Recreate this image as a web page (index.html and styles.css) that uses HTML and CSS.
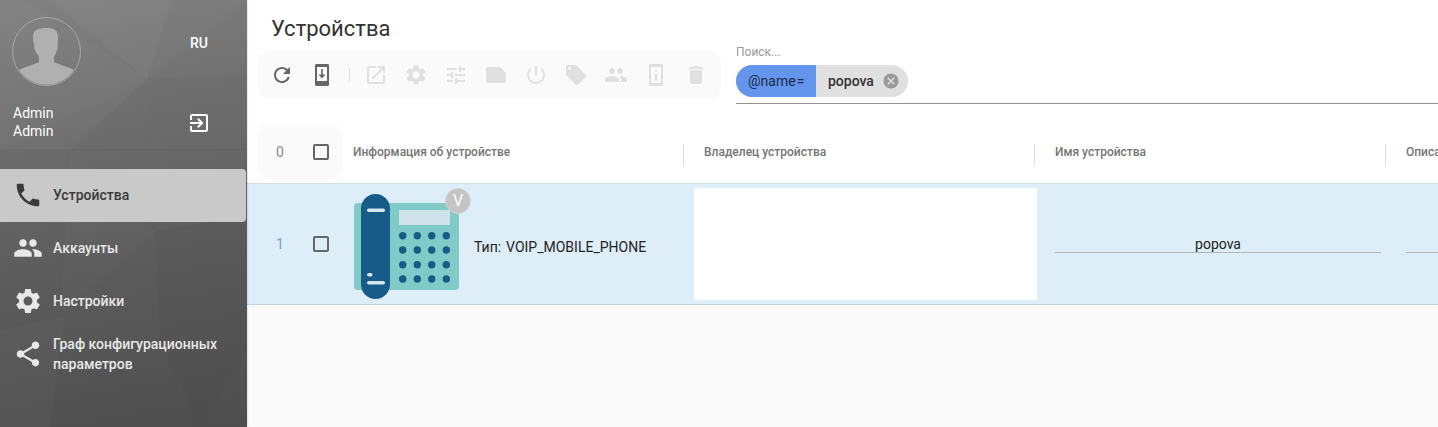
FILE: index.html
```html
<!DOCTYPE html>
<html lang="ru">
<head>
<meta charset="utf-8">
<title>Устройства</title>
<link rel="stylesheet" href="styles.css">
</head>
<body>
<div class="app">
  <aside class="sidebar">
    <svg class="facets" viewBox="0 0 247 427" preserveAspectRatio="none" aria-hidden="true">
      <polygon points="0,0 24,0 147,79 0,150" fill="#fff" opacity=".02"/>
      <polygon points="50,0 172,0 147,79" fill="#fff" opacity=".035"/>
      <polygon points="147,79 247,0 247,75" fill="#000" opacity=".02"/>
      <polygon points="147,79 247,75 247,150 150,150" fill="#000" opacity=".04"/>
      <polygon points="147,79 150,150 70,150" fill="#000" opacity=".03"/>
      <polygon points="0,330 65,316 50,427 0,427" fill="#fff" opacity=".02"/>
      <polygon points="155,231 247,215 247,350 200,427 160,340" fill="#000" opacity=".025"/>
      <polygon points="70,150 155,231 60,316" fill="#fff" opacity=".015"/>
    </svg>
    <header class="profile">
      <div class="profile-col">
        <div class="avatar">
          <svg viewBox="0 0 67 67" aria-hidden="true"><path fill="#b0b0b0" d="M20 19c0-7 5-9 13-9s12 2 12 9c0 4 0 6-.5 9 .5 1 .5 3-.5 4-1 3-2 5-3 7v5c3 2 12 4 20 8A33 33 0 0 1 6 52c8-4 17-6 20-8v-5c-1-2-3-4-4-7-1-1-1-3-.5-4-1-3-1.500-5-1.500-9z"/></svg>
        </div>
        <div class="user-name">Admin<br>Admin</div>
      </div>
      <div class="profile-actions">
        <span class="lang">RU</span>
        <svg class="icon" viewBox="0 0 24 24" aria-hidden="true"><path d="M10.09 15.59L11.5 17l5-5-5-5-1.41 1.41L12.67 11H3v2h9.67l-2.58 2.59zM19 3H5c-1.11 0-2 .9-2 2v4h2V5h14v14H5v-4H3v4c0 1.1.89 2 2 2h14c1.1 0 2-.9 2-2V5c0-1.1-.9-2-2-2z"/></svg>
      </div>
    </header>
    <nav class="nav">
      <a class="nav-item nav-item-active">
        <svg class="nav-icon" viewBox="0 0 24 24" aria-hidden="true"><path d="M6.62 10.79c1.44 2.83 3.76 5.14 6.59 6.59l2.2-2.2c.27-.27.67-.36 1.02-.24 1.12.37 2.33.57 3.57.57.55 0 1 .45 1 1V20c0 .55-.45 1-1 1-9.39 0-17-7.61-17-17 0-.55.45-1 1-1h3.5c.55 0 1 .45 1 1 0 1.25.2 2.45.57 3.57.11.35.03.74-.25 1.02l-2.2 2.2z"/></svg>
        <span class="nav-text">Устройства</span>
      </a>
      <a class="nav-item">
        <svg class="nav-icon" viewBox="0 0 24 24" aria-hidden="true"><path d="M16 11c1.66 0 2.99-1.34 2.99-3S17.66 5 16 5c-1.66 0-3 1.34-3 3s1.34 3 3 3zm-8 0c1.66 0 2.99-1.34 2.99-3S9.66 5 8 5C6.34 5 5 6.34 5 8s1.34 3 3 3zm0 2c-2.33 0-7 1.17-7 3.5V19h14v-2.5c0-2.33-4.67-3.5-7-3.5zm8 0c-.29 0-.62.02-.97.05 1.16.84 1.97 1.97 1.97 3.45V19h6v-2.5c0-2.33-4.67-3.5-7-3.5z"/></svg>
        <span class="nav-text">Аккаунты</span>
      </a>
      <a class="nav-item">
        <svg class="nav-icon" viewBox="0 0 24 24" aria-hidden="true"><path d="M19.14 12.94c.04-.3.06-.61.06-.94 0-.32-.02-.64-.07-.94l2.03-1.58c.18-.14.23-.41.12-.61l-1.92-3.32c-.12-.22-.37-.29-.59-.22l-2.39.96c-.5-.38-1.03-.7-1.62-.94l-.36-2.54c-.04-.24-.24-.41-.48-.41h-3.84c-.24 0-.43.17-.47.41l-.36 2.54c-.59.24-1.13.57-1.62.94l-2.39-.96c-.22-.08-.47 0-.59.22L2.74 8.87c-.12.21-.08.47.12.61l2.03 1.58c-.05.3-.09.63-.09.94s.02.64.07.94l-2.03 1.58c-.18.14-.23.41-.12.61l1.92 3.32c.12.22.37.29.59.22l2.39-.96c.5.38 1.03.7 1.62.94l.36 2.54c.05.24.24.41.48.41h3.84c.24 0 .44-.17.47-.41l.36-2.54c.59-.24 1.13-.56 1.62-.94l2.39.96c.22.08.47 0 .59-.22l1.92-3.32c.12-.22.07-.47-.12-.61l-2.01-1.58zM12 15.6c-1.98 0-3.6-1.62-3.6-3.6s1.62-3.6 3.6-3.6 3.6 1.62 3.6 3.6-1.62 3.6-3.6 3.6z"/></svg>
        <span class="nav-text">Настройки</span>
      </a>
      <a class="nav-item">
        <svg class="nav-icon" viewBox="0 0 24 24" aria-hidden="true"><path d="M18 16.08c-.76 0-1.44.3-1.96.77L8.91 12.7c.05-.23.09-.46.09-.7s-.04-.47-.09-.7l7.05-4.11c.54.5 1.25.81 2.04.81 1.66 0 3-1.34 3-3s-1.34-3-3-3-3 1.34-3 3c0 .24.04.47.09.7L8.04 9.81C7.5 9.31 6.79 9 6 9c-1.66 0-3 1.34-3 3s1.34 3 3 3c.79 0 1.5-.31 2.04-.81l7.12 4.16c-.05.21-.08.43-.08.65 0 1.61 1.31 2.92 2.92 2.92 1.61 0 2.92-1.31 2.92-2.92s-1.31-2.92-2.92-2.92z"/></svg>
        <span class="nav-text">Граф конфигурационных параметров</span>
      </a>
    </nav>
  </aside>

  <main class="main">
    <div class="top">
      <h1 class="title">Устройства</h1>
      <div class="controls">
        <div class="toolbar">
          <button class="tool tool-on"><svg class="icon" viewBox="0 0 24 24" aria-hidden="true"><path d="M17.65 6.35C16.2 4.9 14.21 4 12 4c-4.42 0-7.99 3.58-7.99 8s3.57 8 7.99 8c3.73 0 6.84-2.55 7.73-6h-2.08c-.82 2.33-3.04 4-5.65 4-3.31 0-6-2.69-6-6s2.69-6 6-6c1.66 0 3.14.69 4.22 1.78L13 11h7V4l-2.35 2.35z"/></svg></button>
          <button class="tool tool-on"><svg class="icon" viewBox="0 0 24 24" aria-hidden="true"><path fill-rule="evenodd" d="M6.500 1h11c1 0 1.500.7 1.500 1.500v19c0 .8-.5 1.500-1.500 1.500h-11C5.500 23 5 22.300 5 21.500v-19C5 1.700 5.500 1 6.500 1zM7 4v14h10V4H7zm4.200 2h1.600v5.500H15.500L12 15.500 8.500 11.500h2.700V6z"/></svg></button>
          <span class="tool-sep"></span>
          <button class="tool"><svg class="icon" viewBox="0 0 24 24" aria-hidden="true"><path d="M19 19H5V5h7V3H5c-1.11 0-2 .9-2 2v14c0 1.1.89 2 2 2h14c1.1 0 2-.9 2-2v-7h-2v7zM14 3v2h3.59l-9.83 9.83 1.41 1.41L19 6.41V10h2V3h-7z"/></svg></button>
          <button class="tool"><svg class="icon" viewBox="0 0 24 24" aria-hidden="true"><path d="M19.14 12.94c.04-.3.06-.61.06-.94 0-.32-.02-.64-.07-.94l2.03-1.58c.18-.14.23-.41.12-.61l-1.92-3.32c-.12-.22-.37-.29-.59-.22l-2.39.96c-.5-.38-1.03-.7-1.62-.94l-.36-2.54c-.04-.24-.24-.41-.48-.41h-3.84c-.24 0-.43.17-.47.41l-.36 2.54c-.59.24-1.13.57-1.62.94l-2.39-.96c-.22-.08-.47 0-.59.22L2.74 8.87c-.12.21-.08.47.12.61l2.03 1.58c-.05.3-.09.63-.09.94s.02.64.07.94l-2.03 1.58c-.18.14-.23.41-.12.61l1.92 3.32c.12.22.37.29.59.22l2.39-.96c.5.38 1.03.7 1.62.94l.36 2.54c.05.24.24.41.48.41h3.84c.24 0 .44-.17.47-.41l.36-2.54c.59-.24 1.13-.56 1.62-.94l2.39.96c.22.08.47 0 .59-.22l1.92-3.32c.12-.22.07-.47-.12-.61l-2.01-1.58zM12 15.6c-1.98 0-3.6-1.62-3.6-3.6s1.62-3.6 3.6-3.6 3.6 1.62 3.6 3.6-1.62 3.6-3.6 3.6z"/></svg></button>
          <button class="tool"><svg class="icon" viewBox="0 0 24 24" aria-hidden="true"><path d="M3 17v2h6v-2H3zM3 5v2h10V5H3zm10 16v-2h8v-2h-8v-2h-2v6h2zM7 9v2H3v2h4v2h2V9H7zm14 4v-2H11v2h10zm-6-4h2V7h4V5h-4V3h-2v6z"/></svg></button>
          <button class="tool"><svg class="icon" viewBox="0 0 24 24" aria-hidden="true"><path d="M22 10l-6-6H4c-1.1 0-2 .9-2 2v12.01c0 1.1.9 1.99 2 1.99l16-.01c1.1 0 2-.89 2-1.99v-8z"/></svg></button>
          <button class="tool"><svg class="icon" viewBox="0 0 24 24" aria-hidden="true"><path d="M13 3h-2v10h2V3zm4.830 2.170l-1.420 1.420C17.990 7.860 19 9.810 19 12c0 3.870-3.130 7-7 7s-7-3.130-7-7c0-2.190 1.010-4.140 2.580-5.420L6.170 5.170C4.230 6.820 3 9.260 3 12c0 4.970 4.030 9 9 9s9-4.030 9-9c0-2.740-1.230-5.180-3.170-6.830z"/></svg></button>
          <button class="tool"><svg class="icon" viewBox="0 0 24 24" aria-hidden="true"><path d="M21.41 11.58l-9-9C12.05 2.22 11.55 2 11 2H4c-1.1 0-2 .9-2 2v7c0 .55.22 1.05.59 1.42l9 9c.36.36.86.58 1.41.58.55 0 1.05-.22 1.41-.59l7-7c.37-.36.59-.86.59-1.41 0-.55-.23-1.06-.59-1.42zM5.5 7C4.67 7 4 6.33 4 5.5S4.67 4 5.5 4 7 4.67 7 5.5 6.33 7 5.5 7z"/></svg></button>
          <button class="tool"><svg class="icon" viewBox="0 0 24 24" aria-hidden="true"><path d="M16 11c1.66 0 2.99-1.34 2.99-3S17.66 5 16 5c-1.66 0-3 1.34-3 3s1.34 3 3 3zm-8 0c1.66 0 2.99-1.34 2.99-3S9.66 5 8 5C6.34 5 5 6.34 5 8s1.34 3 3 3zm0 2c-2.33 0-7 1.17-7 3.5V19h14v-2.5c0-2.33-4.67-3.5-7-3.5zm8 0c-.29 0-.62.02-.97.05 1.16.84 1.97 1.97 1.97 3.45V19h6v-2.5c0-2.33-4.67-3.5-7-3.5z"/></svg></button>
          <button class="tool"><svg class="icon" viewBox="0 0 24 24" aria-hidden="true"><path fill-rule="evenodd" d="M6.500 1h11c1 0 1.500.7 1.500 1.500v19c0 .8-.5 1.500-1.500 1.500h-11C5.500 23 5 22.300 5 21.500v-19C5 1.700 5.500 1 6.500 1zM7 4v16h10V4H7zm4 2.500h2v2h-2v-2zm0 4h2v7h-2v-7z"/></svg></button>
          <button class="tool"><svg class="icon" viewBox="0 0 24 24" aria-hidden="true"><path d="M6 19c0 1.1.9 2 2 2h8c1.1 0 2-.9 2-2V7H6v12zM19 4h-3.5l-1-1h-5l-1 1H5v2h14V4z"/></svg></button>
        </div>
        <div class="search">
          <label class="search-label">Поиск...</label>
          <div class="chip">
            <span class="chip-key">@name<span class="chip-op">=</span></span>
            <span class="chip-value">popova</span>
            <svg class="chip-close" viewBox="0 0 24 24" aria-hidden="true"><path d="M12 2C6.47 2 2 6.47 2 12s4.47 10 10 10 10-4.47 10-10S17.53 2 12 2zm5 13.59L15.59 17 12 13.41 8.41 17 7 15.59 10.59 12 7 8.41 8.41 7 12 10.59 15.59 7 17 8.41 13.41 12 17 15.59z"/></svg>
          </div>
        </div>
      </div>
    </div>

    <div class="table">
      <div class="row row-head">
        <div class="num-cell num-head"><span class="num">0</span><span class="check"></span></div>
        <div class="cell cell-first">Информация об устройстве</div>
        <div class="cell">Владелец устройства</div>
        <div class="cell">Имя устройства</div>
        <div class="cell">Описание</div>
      </div>
      <div class="row row-body">
        <div class="num-cell"><span class="num num-link">1</span><span class="check"></span></div>
        <div class="device">
          <div class="device-pic">
            <svg class="device-img" viewBox="0 0 105 105" aria-hidden="true">
              <rect x="0" y="9" width="105" height="87" rx="4" fill="#80cbc8"/>
              <rect x="45" y="16" width="51" height="15" fill="#d0e2e9"/>
              <g fill="#175c88">
                <rect x="7" y="0" width="29" height="105" rx="14.5"/>
                <circle cx="48.7" cy="41.7" r="3.7"/><circle cx="63.3" cy="41.7" r="3.7"/><circle cx="77.7" cy="41.7" r="3.7"/><circle cx="92.3" cy="41.7" r="3.7"/>
                <circle cx="48.7" cy="56" r="3.7"/><circle cx="63.3" cy="56" r="3.7"/><circle cx="77.7" cy="56" r="3.7"/><circle cx="92.3" cy="56" r="3.7"/>
                <circle cx="48.7" cy="70.7" r="3.7"/><circle cx="63.3" cy="70.7" r="3.7"/><circle cx="77.7" cy="70.7" r="3.7"/><circle cx="92.3" cy="70.7" r="3.7"/>
                <circle cx="48.7" cy="85" r="3.7"/><circle cx="63.3" cy="85" r="3.7"/><circle cx="77.7" cy="85" r="3.7"/><circle cx="92.3" cy="85" r="3.7"/>
              </g>
              <g fill="#d8e6ec">
                <rect x="13" y="14.5" width="18" height="3.4" rx="1.7"/>
                <rect x="13" y="87" width="18" height="3.4" rx="1.7"/>
                <rect x="13" y="79" width="5.5" height="3.4" rx="1.7"/>
              </g>
            </svg>
            <span class="badge">V</span>
          </div>
          <span class="device-type">Тип:&nbsp; VOIP_MOBILE_PHONE</span>
        </div>
        <div class="owner"></div>
        <div class="field-cell"><div class="field">popova</div></div>
        <div class="field-cell"><div class="field"></div></div>
      </div>
    </div>
  </main>
</div>
</body>
</html>
```

FILE: styles.css
```css
* { box-sizing: border-box; }
html, body { margin: 0; height: 100%; overflow: hidden; }
body { font-family: Roboto, "Noto Sans", sans-serif; color: #222; background: #fff; }

.app { display: flex; width: 1438px; height: 427px; overflow: hidden; }

.icon { width: 24px; height: 24px; fill: currentColor; display: block; }

/* sidebar */
.sidebar {
  position: relative;
  flex: 0 0 247px;
  height: 427px;
  color: #fff;
  background: linear-gradient(170deg, #7c7c7c 0, #6a6a6a 35%, #5c5c5c 60%, #4e4e4e 100%);
  box-shadow: 0 0 2px rgba(0,0,0,.25);
  z-index: 1;
}
.facets { position: absolute; inset: 0; width: 100%; height: 100%; }

.profile {
  position: relative;
  display: flex;
  justify-content: space-between;
  height: 149px;
  padding: 17px 36px 0 12px;
  background: rgba(255,255,255,.04);
}
.avatar {
  width: 69px;
  height: 69px;
  border: 1px solid #a8a8a8;
  border-radius: 50%;
  overflow: hidden;
}
.avatar svg { display: block; width: 67px; height: 67px; }
.user-name { margin: 18px 0 0 1px; font-size: 14px; line-height: 18px; font-weight: 400; }
.profile-actions {
  display: flex;
  flex-direction: column;
  align-items: center;
  width: 24px;
  padding-top: 18px;
  gap: 60px;
}
.lang { font-size: 14px; line-height: 16px; font-weight: 500; }
.nav { position: relative; padding-top: 20px; }
.nav-item {
  display: flex;
  align-items: center;
  height: 53px;
  padding-left: 13px;
  gap: 10px;
  font-size: 14px;
  line-height: 20px;
  font-weight: 500;
  color: #e8e8e8;
}
.nav-text { margin-top: -2px; }
.nav-item-active {
  width: 246px;
  background: #c9c9c9;
  color: #3a3a3a;
  border-radius: 0 4px 4px 0;
}
.nav-icon { flex: 0 0 30px; width: 30px; height: 30px; fill: currentColor; margin-top: -1px; }

/* main */
.main { flex: 1; min-width: 0; display: flex; flex-direction: column; background: #fafafa; overflow: hidden; }
.top { background: #fff; height: 124px; padding: 16px 0 0 10px; }
.title { margin: 0 0 0 14px; font-size: 22px; line-height: 26px; font-weight: 400; color: #333; }
.controls { display: flex; gap: 15px; margin-top: 9px; }
.toolbar {
  flex: 0 0 464px;
  display: flex;
  align-items: center;
  height: 48px;
  padding: 0 5px;
  background: #fafafa;
  border-radius: 12px;
}
.tool {
  flex: 0 0 40px;
  display: flex;
  align-items: center;
  justify-content: center;
  height: 40px;
  padding: 0;
  border: 0;
  background: none;
  color: #e0e0e0;
}
.tool-on { color: #666; }
.tool-sep { flex: 0 0 14px; height: 14px; position: relative; }
.tool-sep::before { content: ""; display: block; width: 1px; height: 14px; margin: 0 auto; background: #ddd; }

.search { flex: 1; height: 59px; border-bottom: 1px solid #949494; margin-top: -6px; }
.search-label { display: block; font-size: 12px; line-height: 14px; color: #999; height: 14px; }
.chip {
  display: inline-flex;
  align-items: center;
  height: 32px;
  margin-top: 6px;
  background: #e0e0e0;
  border-radius: 16px;
  font-size: 14px;
  color: #222;
}
.chip-key {
  display: flex;
  align-items: center;
  justify-content: flex-start;
  width: 80px;
  height: 32px;
  padding: 0 0 0 12px;
  background: #6495ed;
  border-radius: 16px 0 0 16px;
  color: #1c2a44;
}
.chip-op { margin-left: 1px; }
.chip-value { padding-left: 12px; font-weight: 500; color: #333; }
.chip-close { width: 18px; height: 18px; margin: 0 8px 0 8px; fill: #999; }

/* table */
.table { width: 1191px; overflow: hidden; }
.row {
  display: grid;
  grid-template-columns: 86px 341px 351px 351px 351px;
  padding-left: 10px;
  width: 1500px;
}
.row-head { height: 60px; background: #fff; border-bottom: 1px solid #d8dfe4; align-items: start; }
.row-body { height: 121px; background: #deeef9; border-bottom: 1px solid #c5d3de; }

.num-cell {
  display: flex;
  align-items: center;
  height: 100%;
  padding-left: 19px;
}
.num-head { height: 56px; background: #fafafa; border-radius: 12px; }
.num { width: 37px; font-size: 14px; color: #888; }
.num-link { color: #7f9cc4; }
.check { width: 16px; height: 16px; border: 2px solid #666; border-radius: 2px; }

.cell {
  position: relative;
  height: 56px;
  display: flex;
  align-items: center;
  padding-left: 20px;
  font-size: 12px;
  font-weight: 500;
  color: #757575;
  white-space: nowrap;
}
.cell::before {
  content: "";
  position: absolute;
  left: -1px;
  top: 20px;
  width: 1px;
  height: 22px;
  background: #ddd;
}
.cell-first { padding-left: 10px; }
.cell-first::before { display: none; }

.device { display: flex; align-items: center; padding: 5px 0 0 11px; }
.device-pic { position: relative; width: 105px; height: 105px; flex: none; }
.device-img { display: block; width: 105px; height: 105px; }
.badge {
  position: absolute;
  top: -6px;
  right: -12px;
  width: 26px;
  height: 26px;
  border-radius: 50%;
  background: #c4c4c4;
  border: 1px solid #d4d4d4;
  color: #fff;
  font-size: 16px;
  line-height: 24px;
  text-align: center;
}
.device-type { margin-left: 15px; font-size: 14px; color: #222; white-space: nowrap; word-spacing: -1px; }

.owner { background: #fff; margin: 4px -2px 4px 10px; height: 112px; }
.field-cell { padding: 0 5px 0 20px; position: relative; }
.field {
  height: 18px;
  margin-top: 51px;
  border-bottom: 1px solid #b5b5b5;
  font-size: 14px;
  line-height: 19px;
  text-align: center;
  color: #222;
}
```
